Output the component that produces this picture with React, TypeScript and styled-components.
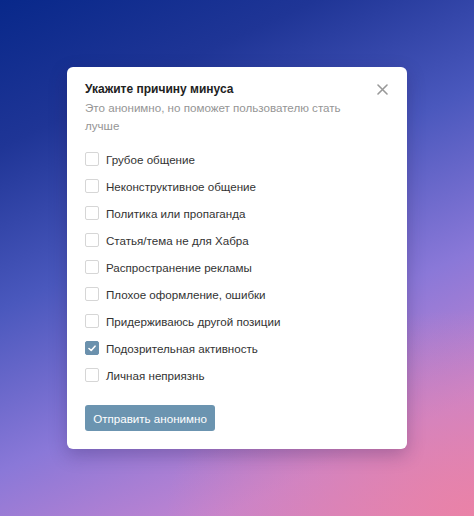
import React, { useState } from "react";
import styled, { createGlobalStyle } from "styled-components";

const GlobalStyle = createGlobalStyle`
  html, body {
    margin: 0;
    padding: 0;
    height: 100%;
  }
  body {
    font-family: "Liberation Sans", "Noto Sans", Arial, sans-serif;
    -webkit-font-smoothing: antialiased;
  }
`;

const Backdrop = styled.div`
  width: 474px;
  height: 516px;
  display: flex;
  justify-content: center;
  align-items: flex-start;
  padding-top: 67px;
  box-sizing: border-box;
  background:
    radial-gradient(ellipse 65% 40% at 100% 100%, rgba(236, 130, 165, 0.9), rgba(236, 130, 165, 0) 100%),
    linear-gradient(155deg, #08288a 0%, #1f3596 20%, #4a58bd 42%, #8a78d8 64%, #c384d0 84%, #d884bc 100%);
`;

const Modal = styled.div`
  width: 340px;
  box-sizing: border-box;
  background-color: #fff;
  border-radius: 6px;
  box-shadow: 0 6px 18px rgba(40, 20, 80, 0.28);
  padding: 13px 18px 18px;
  display: flex;
  flex-direction: column;
`;

const Heading = styled.div`
  display: flex;
  justify-content: space-between;
  align-items: center;
`;

const Title = styled.h2`
  margin: 0;
  font-size: 12px;
  font-weight: 700;
  color: #222;
  line-height: 18px;
`;

const CloseButton = styled.button`
  background: none;
  border: none;
  padding: 0;
  margin: 0 -2px 0 0;
  width: 18px;
  height: 18px;
  cursor: pointer;
  display: flex;
  align-items: center;
  justify-content: center;
`;

const Subtitle = styled.p`
  margin: 1px 0 0;
  font-size: 11.6px;
  line-height: 18px;
  color: #959595;
  width: 280px;
`;

const ReasonList = styled.ul`
  list-style: none;
  margin: 15px 0 0;
  padding: 0;
  display: flex;
  flex-direction: column;
  gap: 9px;
`;

const Reason = styled.li`
  display: flex;
  align-items: center;
  gap: 7px;
  height: 18px;
  font-size: 11.6px;
  color: #333;
  cursor: pointer;
`;

const Box = styled.span<{ $checked: boolean }>`
  width: 14px;
  height: 14px;
  box-sizing: border-box;
  border-radius: 2px;
  border: 1px solid ${({ $checked }) => ($checked ? "#6b91ad" : "#d6d6d6")};
  background-color: ${({ $checked }) => ($checked ? "#6b91ad" : "#fff")};
  display: flex;
  align-items: center;
  justify-content: center;
  flex-shrink: 0;
`;

const SubmitButton = styled.button`
  margin-top: 21px;
  align-self: flex-start;
  width: 130px;
  height: 26px;
  padding: 0;
  border: none;
  border-radius: 3px;
  background-color: #6b94b0;
  color: #fff;
  font-family: inherit;
  font-size: 11.6px;
  cursor: pointer;
`;

const reasons = [
  "Грубое общение",
  "Неконструктивное общение",
  "Политика или пропаганда",
  "Статья/тема не для Хабра",
  "Распространение рекламы",
  "Плохое оформление, ошибки",
  "Придерживаюсь другой позиции",
  "Подозрительная активность",
  "Личная неприязнь",
];

export default function App() {
  const [checked, setChecked] = useState<number[]>([7]);

  const toggle = (i: number) =>
    setChecked((prev) => (prev.includes(i) ? prev.filter((x) => x !== i) : [...prev, i]));

  return (
    <>
      <GlobalStyle />
      <Backdrop>
        <Modal>
          <Heading>
            <Title>Укажите причину минуса</Title>
            <CloseButton aria-label="Закрыть">
              <svg width="11" height="11" viewBox="0 0 11 11">
                <path d="M1 1L10 10M10 1L1 10" stroke="#999" strokeWidth="1.6" strokeLinecap="round" />
              </svg>
            </CloseButton>
          </Heading>
          <Subtitle>Это анонимно, но поможет пользователю стать лучше</Subtitle>
          <ReasonList>
            {reasons.map((r, i) => {
              const on = checked.includes(i);
              return (
                <Reason key={r} onClick={() => toggle(i)}>
                  <Box $checked={on}>
                    {on && (
                      <svg width="8" height="7" viewBox="0 0 8 7">
                        <path d="M1 3.5L3.2 5.5L7 1.2" fill="none" stroke="#fff" strokeWidth="1.6" strokeLinecap="round" strokeLinejoin="round" />
                      </svg>
                    )}
                  </Box>
                  {r}
                </Reason>
              );
            })}
          </ReasonList>
          <SubmitButton>Отправить анонимно</SubmitButton>
        </Modal>
      </Backdrop>
    </>
  );
}
